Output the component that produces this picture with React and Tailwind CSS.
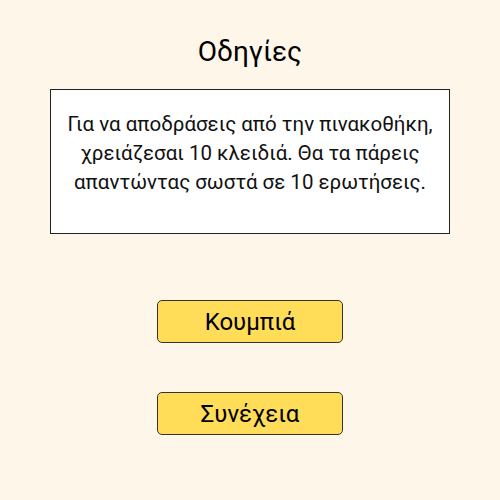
export default function App() {
  return (
    <div className="w-[500px] h-[500px] bg-[#fef6e9] flex flex-col items-center" style={{ fontFamily: 'Roboto, "Noto Sans", sans-serif' }}>
      <h1 className="mt-[34px] h-9 text-[28px] leading-9 text-black">Οδηγίες</h1>
      <div className="mt-[19px] w-[400px] h-[145px] bg-white border border-[#222] px-2 pt-[20px] text-center text-[20.5px] leading-[29px] text-[#111]">
        Για να αποδράσεις από την πινακοθήκη, χρειάζεσαι 10 κλειδιά. Θα τα πάρεις απαντώντας σωστά σε 10 ερωτήσεις.
      </div>
      <button className="mt-[66px] w-[186px] h-[43px] rounded-[5px] border border-[#333] bg-[#ffdd59] text-[24px] text-black">Κουμπιά</button>
      <button className="mt-[49px] w-[186px] h-[43px] rounded-[5px] border border-[#333] bg-[#ffdd59] text-[24px] text-black">Συνέχεια</button>
    </div>
  );
}
